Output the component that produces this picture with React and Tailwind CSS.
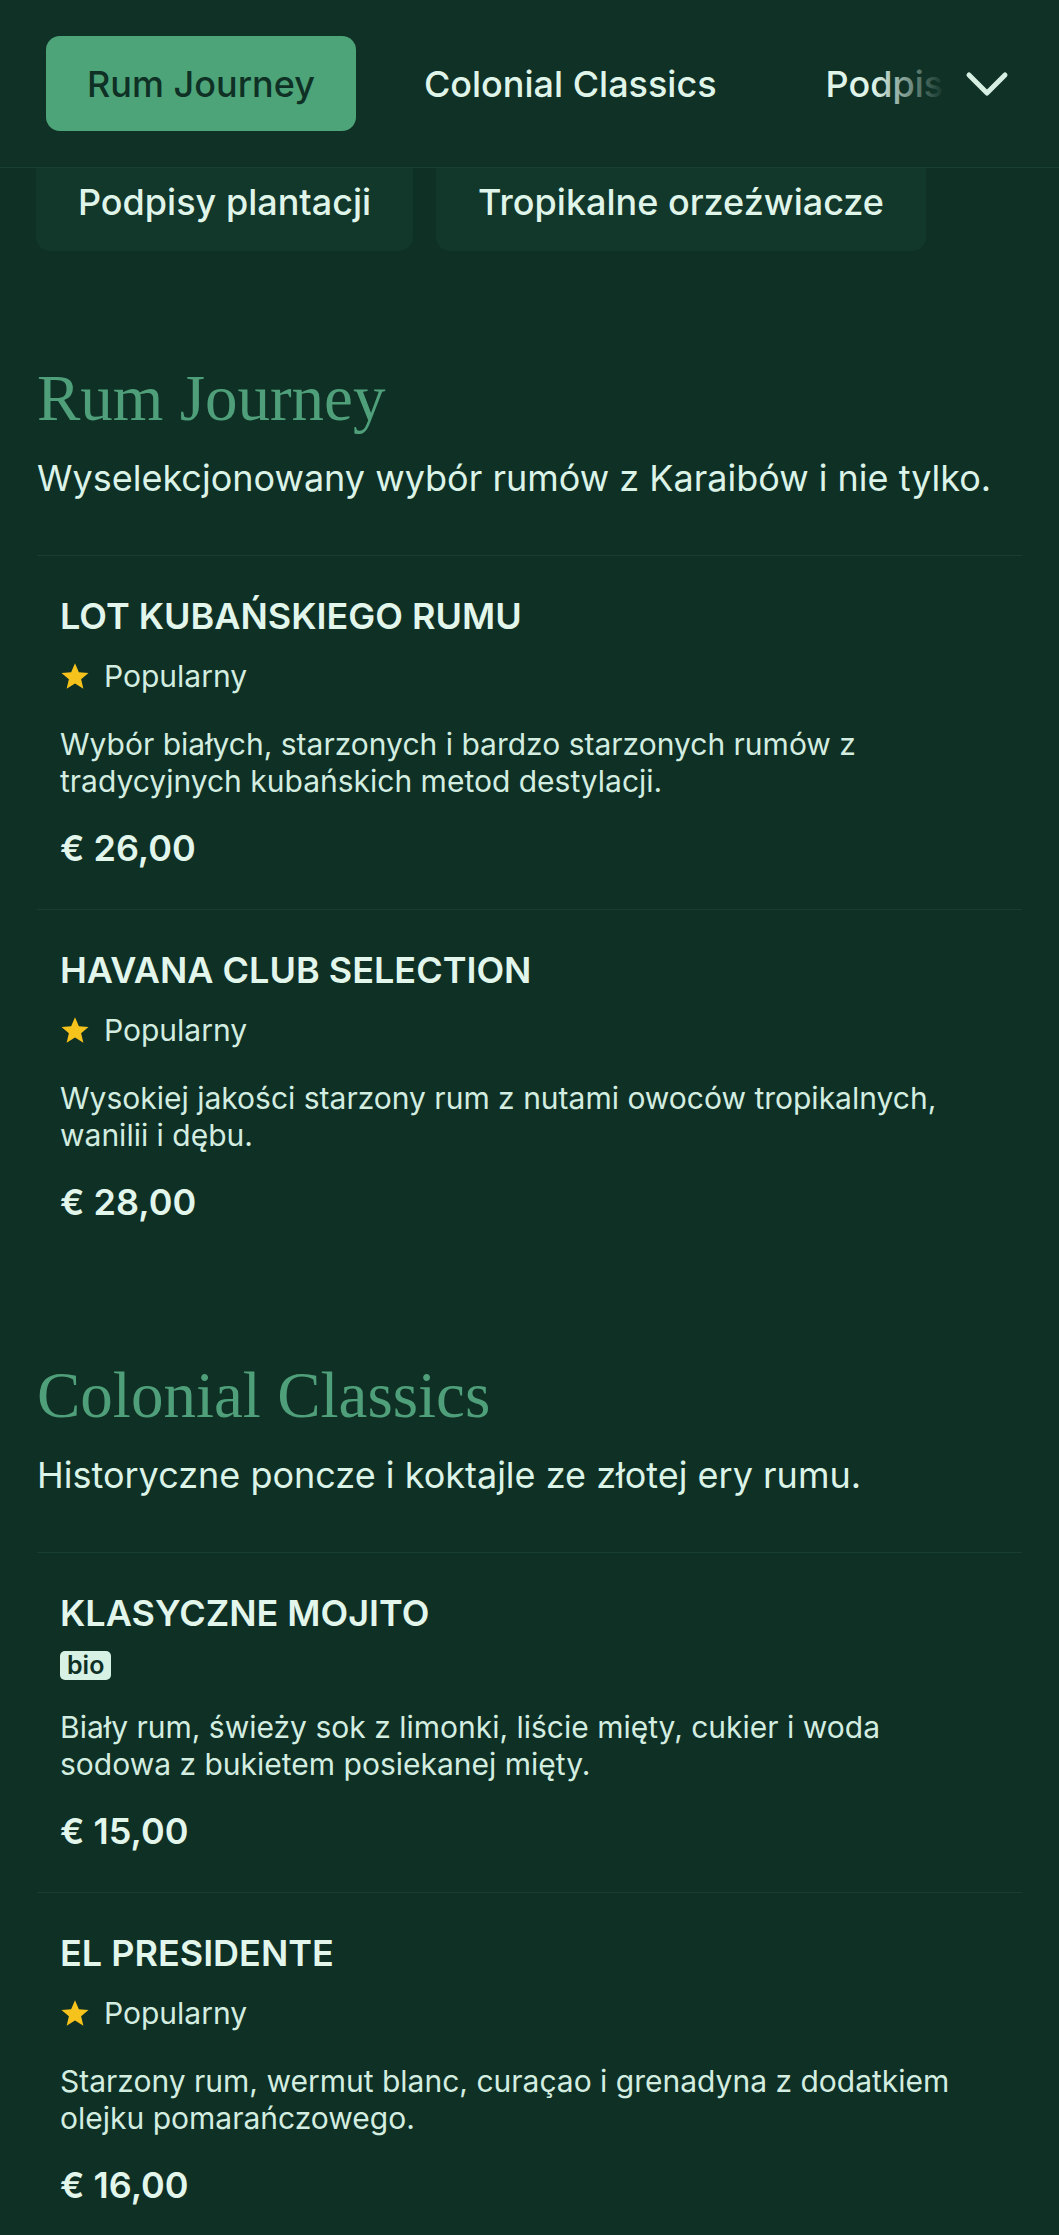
import React from 'react'

const sections = [
  {
    title: 'Rum Journey',
    subtitle: 'Wyselekcjonowany wybór rumów z Karaibów i nie tylko.',
    items: [
      {
        name: 'LOT KUBAŃSKIEGO RUMU',
        tag: 'popular',
        desc: 'Wybór białych, starzonych i bardzo starzonych rumów z tradycyjnych kubańskich metod destylacji.',
        price: '€ 26,00',
      },
      {
        name: 'HAVANA CLUB SELECTION',
        tag: 'popular',
        desc: 'Wysokiej jakości starzony rum z nutami owoców tropikalnych, wanilii i dębu.',
        price: '€ 28,00',
      },
    ],
  },
  {
    title: 'Colonial Classics',
    subtitle: 'Historyczne poncze i koktajle ze złotej ery rumu.',
    items: [
      {
        name: 'KLASYCZNE MOJITO',
        tag: 'bio',
        desc: 'Biały rum, świeży sok z limonki, liście mięty, cukier i woda sodowa z bukietem posiekanej mięty.',
        price: '€ 15,00',
      },
      {
        name: 'EL PRESIDENTE',
        tag: 'popular',
        desc: 'Starzony rum, wermut blanc, curaçao i grenadyna z dodatkiem olejku pomarańczowego.',
        price: '€ 16,00',
      },
    ],
  },
]

function Star() {
  return (
    <svg width="30" height="30" viewBox="0 0 24 24" className="shrink-0">
      <path
        d="M12 1.8l3.1 7.1 7.7.6-5.9 5 1.8 7.6L12 18l-6.7 4.1 1.8-7.6-5.9-5 7.7-.6z"
        fill="#f6c21c"
      />
    </svg>
  )
}

function Item({ item }) {
  return (
    <div className="border-t border-[#173e31] px-[23px] pt-[40px] pb-[41px]">
      <h3 className="text-[36px] leading-[40px] font-semibold text-[#e2f6ec]">{item.name}</h3>
      {item.tag === 'popular' ? (
        <div className="mt-[22px] mb-[32px] h-[36px] flex items-center gap-[14px]">
          <Star />
          <span className="text-[30px] text-[#d3ede0]">Popularny</span>
        </div>
      ) : (
        <div className="mt-[18px] mb-[29px] h-[29px] flex">
          <span className="px-[7px] rounded-[5px] bg-[#d8f1e5] text-[#0f3025] text-[25px] leading-[29px] font-semibold">
            bio
          </span>
        </div>
      )}
      <p className="max-w-[900px] text-[30px] leading-[37px] text-[#d3ede0]">{item.desc}</p>
      <div className="mt-[28px] text-[36px] leading-[40px] font-semibold text-[#e2f6ec]">{item.price}</div>
    </div>
  )
}

export default function App() {
  const tabs = ['Rum Journey', 'Colonial Classics', 'Podpisy plantacji']

  return (
    <div className="min-h-screen bg-[#0f3025] pb-[40px]" style={{ fontFamily: 'Inter, "Noto Sans", sans-serif' }}>
      <header className="h-[168px] bg-[#0f3126] border-b border-[#1a4034] flex items-center pl-[46px] pr-[50px]">
        <div className="relative flex-1 overflow-hidden">
          <div className="flex gap-[27px] whitespace-nowrap">
            {tabs.map((t, i) => (
              <div
                key={t}
                className={
                  i === 0
                    ? 'h-[95px] px-[41px] rounded-[14px] bg-[#4da479] text-[#0f3025] text-[36px] font-medium flex items-center'
                    : 'h-[95px] px-[41px] rounded-[14px] text-[#e0f5ea] text-[36px] font-medium flex items-center'
                }
              >
                {t}
              </div>
            ))}
          </div>
          <div className="absolute inset-y-0 right-0 w-[80px] bg-gradient-to-r from-transparent to-[#0f3126] to-90%" />
        </div>
        <button className="ml-[12px] w-[44px] h-[30px] flex items-center justify-center">
          <svg width="44" height="28" viewBox="0 0 44 28" fill="none">
            <polyline
              points="4,5 22,23 40,5"
              stroke="#d6efe2"
              strokeWidth="5"
              strokeLinecap="round"
              strokeLinejoin="round"
            />
          </svg>
        </button>
      </header>

      <div className="flex gap-[23px] px-[36px]">
        <div className="pt-[13px] pb-[28px] px-[42px] rounded-b-[14px] bg-[#12372b] text-[36px] leading-[42px] font-medium text-[#e0f5ea]">
          Podpisy plantacji
        </div>
        <div className="pt-[13px] pb-[28px] px-[42px] rounded-b-[14px] bg-[#12372b] text-[36px] leading-[42px] font-medium text-[#e0f5ea]">
          Tropikalne orzeźwiacze
        </div>
      </div>

      <main className="px-[37px] mt-[115px] flex flex-col gap-[100px]">
        {sections.map((s) => (
          <section key={s.title}>
            <h2
              className="text-[65px] leading-none text-[#4fa07a]"
              style={{ fontFamily: '"Liberation Serif", serif' }}
            >
              {s.title}
            </h2>
            <p className="mt-[25px] text-[36px] leading-[44px] text-[#dcf3e8]">{s.subtitle}</p>
            <div className="mt-[55px]">
              {s.items.map((item) => (
                <Item key={item.name} item={item} />
              ))}
            </div>
          </section>
        ))}
      </main>
    </div>
  )
}
